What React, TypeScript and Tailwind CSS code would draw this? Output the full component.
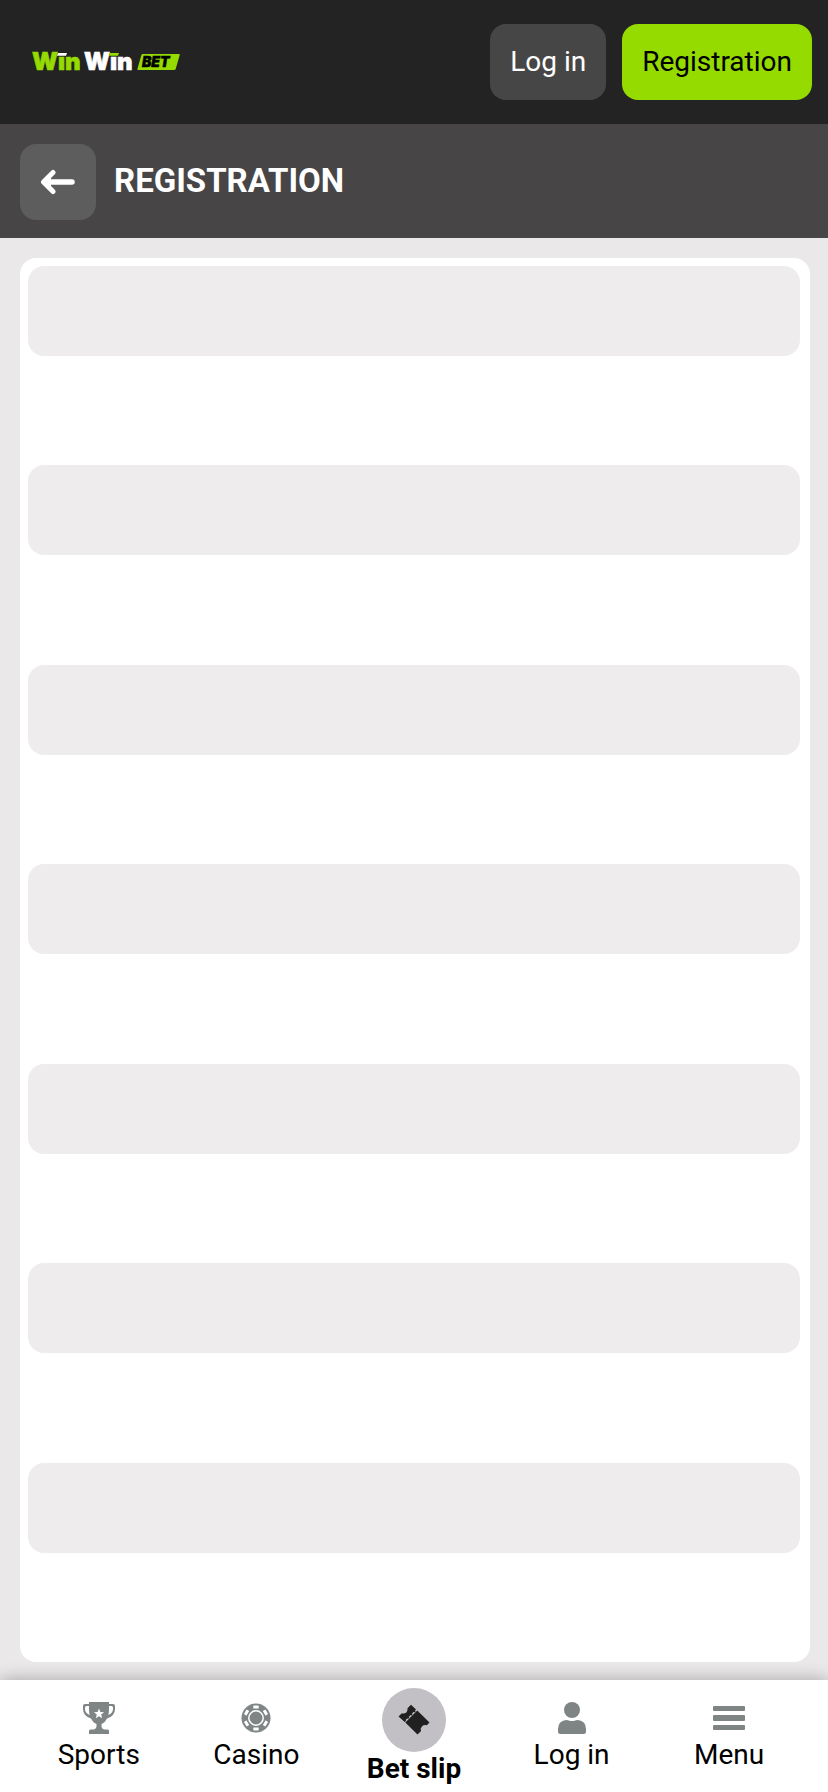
import React from 'react'

interface INavItem {
  label: string
  icon: React.ReactNode
}

const Logo = () => (
  <svg width="148" height="40" viewBox="0 -8 148 40" role="img" aria-label="WinWin Bet">
    <g fontFamily="Inter, sans-serif" fontWeight="900" fontSize="24" strokeWidth=".6">
      <text x="0" y="20" fill="#95db00" stroke="#95db00">Wın</text>
      <text x="52" y="20" fill="#ffffff" stroke="#ffffff">Wın</text>
    </g>
    <path d="M26 3h9l-1 2.800h-9z" fill="#ffffff" />
    <path d="M78 3h9l-1 2.800h-9z" fill="#95db00" />
    <path d="M111 4h36q1 0 .7 1l-4 14q-.4 1-1.500 1h-36q-1.200 0-.8-1l4-14q.4-1 1.600-1z" fill="#95db00" />
    <text
      x="110"
      y="17"
      fill="#000000"
      stroke="#000000"
      strokeWidth=".5"
      fontFamily="Inter, sans-serif"
      fontWeight="900"
      fontStyle="italic"
      fontSize="14"
    >
      BET
    </text>
  </svg>
)

const ArrowIcon = () => (
  <svg width="36" height="26" viewBox="0 0 36 26" fill="none" stroke="#ffffff" strokeLinecap="round" strokeLinejoin="round">
    <path d="M13 3.500 3.500 13 13 22.500" strokeWidth="5" />
    <path d="M5 13h27" strokeWidth="5.500" />
    <path d="m5 13 5-5v10z" fill="#ffffff" strokeWidth="2" />
  </svg>
)

const TrophyIcon = () => (
  <svg width="32" height="32" viewBox="0 0 32 32" fill="#7f8484">
    <path d="M6 0h20v2h4q2 0 2 2v3q0 7-8 9.500-2.500 4.500-5.500 5.500v2.500q0 2 2.500 3h3.500q1.500 0 1.500 1.500v3H6v-3q0-1.500 1.500-1.500H11q2.500-1 2.500-3V22Q10.500 21 8 16.500 0 14 0 7V4q0-2 2-2h4z" />
    <path d="M3.500 4H6v4q0 3 .8 5Q2 11 2 7V5.500Q2 4 3.500 4zM28.500 4H26v4q0 3-.8 5Q30 11 30 7V5.500Q30 4 28.500 4z" fill="#ffffff" />
    <path d="m16 6.500 1.400 3.500 3.700.2-2.900 2.400 1 3.600-3.200-2-3.200 2 1-3.600-2.900-2.400 3.700-.2z" fill="#ffffff" />
  </svg>
)

const ChipIcon = () => (
  <svg width="32" height="32" viewBox="0 0 32 32">
    <circle cx="16" cy="16" r="14.500" fill="#7f8484" />
    <circle cx="16" cy="16" r="7.200" fill="none" stroke="#ffffff" strokeWidth="1.500" />
    <g fill="#ffffff">
      {[0, 60, 120, 180, 240, 300].map((angle) => (
        <rect key={angle} x="13.300" y="3.600" width="5.400" height="3" rx=".4" transform={`rotate(${angle} 16 16)`} />
      ))}
    </g>
  </svg>
)

const TicketIcon = () => (
  <svg width="32" height="32" viewBox="0 0 32 32" fill="#202020">
    <path d="m13 .8 5 4.700L6.200 17.500.5 12.500 3.500 9.500q3.500.5 5-1.300Q10 6.500 9.500 4.300z" />
    <path d="M19.300 6.500 31.500 18.500l-2.700 2.700q-3-.6-4.900 1.200-1.800 2-.8 4.500L19.500 30.500 7.300 18.500z" />
    <path d="M6.200 17.500 18.500 5.500" stroke="#202020" strokeWidth="1.500" strokeDasharray="2 2.500" />
  </svg>
)

const UserIcon = () => (
  <svg width="32" height="32" viewBox="0 0 32 32" fill="#7f8484">
    <circle cx="16" cy="8" r="8" />
    <path d="M10 18q2 0 3.500.7 2.500.8 5 0Q20 18 22 18q8 1 8 9v2.500q0 2.500-2.500 2.500h-23Q2 32 2 29.500V27q0-8 8-9z" />
  </svg>
)

const MenuIcon = () => (
  <svg width="32" height="32" viewBox="0 0 32 32" fill="#7f8484">
    <rect y="4" width="32" height="5" rx="1" />
    <rect y="13" width="32" height="6" rx="1" />
    <rect y="23" width="32" height="5" rx="1" />
  </svg>
)

const leftItems: INavItem[] = [
  { label: 'Sports', icon: <TrophyIcon /> },
  { label: 'Casino', icon: <ChipIcon /> }
]
const rightItems: INavItem[] = [
  { label: 'Log in', icon: <UserIcon /> },
  { label: 'Menu', icon: <MenuIcon /> }
]

const NavLink = ({ label, icon }: INavItem) => (
  <a href="#" className="flex flex-1 flex-col items-center gap-1 pt-[22px]">
    {icon}
    <span>{label}</span>
  </a>
)

const App = () => {
  return (
    <div className="flex min-h-screen flex-col bg-[#eae8e9] font-['Roboto',sans-serif] text-[28px] leading-[34px] text-black">
      <header className="flex items-center justify-between bg-[#242323] py-6 pr-4 pl-8">
        <a href="#">
          <Logo />
        </a>
        <div className="flex gap-4">
          <button className="h-[76px] rounded-2xl bg-[#474646] px-5 text-white">Log in</button>
          <button className="h-[76px] rounded-2xl bg-[#95db00] px-5">Registration</button>
        </div>
      </header>
      <div className="flex gap-[18px] bg-[#474546] px-5 pt-5 pb-[18px]">
        <button aria-label="Back" className="flex size-[76px] items-center justify-center rounded-2xl bg-[#5d5d5d]">
          <ArrowIcon />
        </button>
        <h1 className="text-[33px] leading-[74px] font-bold text-white">REGISTRATION</h1>
      </div>
      <main className="flex flex-1 flex-col pt-5 pr-[18px] pb-[18px] pl-5">
        <div className="flex flex-1 flex-col rounded-2xl bg-white pt-2 pr-[10px] pl-2">
          {[1, 2, 3, 4, 5, 6, 7].map((row) => (
            <div key={row} className="flex-1">
              <div className="h-[90px] rounded-2xl bg-[#eeeced]" />
            </div>
          ))}
        </div>
      </main>
      <nav className="flex h-28 bg-white px-5 shadow-[0_0_16px_rgba(0,0,0,0.3)]">
        {leftItems.map((item) => (
          <NavLink key={item.label} {...item} />
        ))}
        <a href="#" className="flex flex-1 flex-col items-center pt-2 font-bold">
          <span className="flex size-16 items-center justify-center rounded-full bg-[#c2c0c4]">
            <TicketIcon />
          </span>
          <span>Bet slip</span>
        </a>
        {rightItems.map((item) => (
          <NavLink key={item.label} {...item} />
        ))}
      </nav>
    </div>
  )
}

export default App
